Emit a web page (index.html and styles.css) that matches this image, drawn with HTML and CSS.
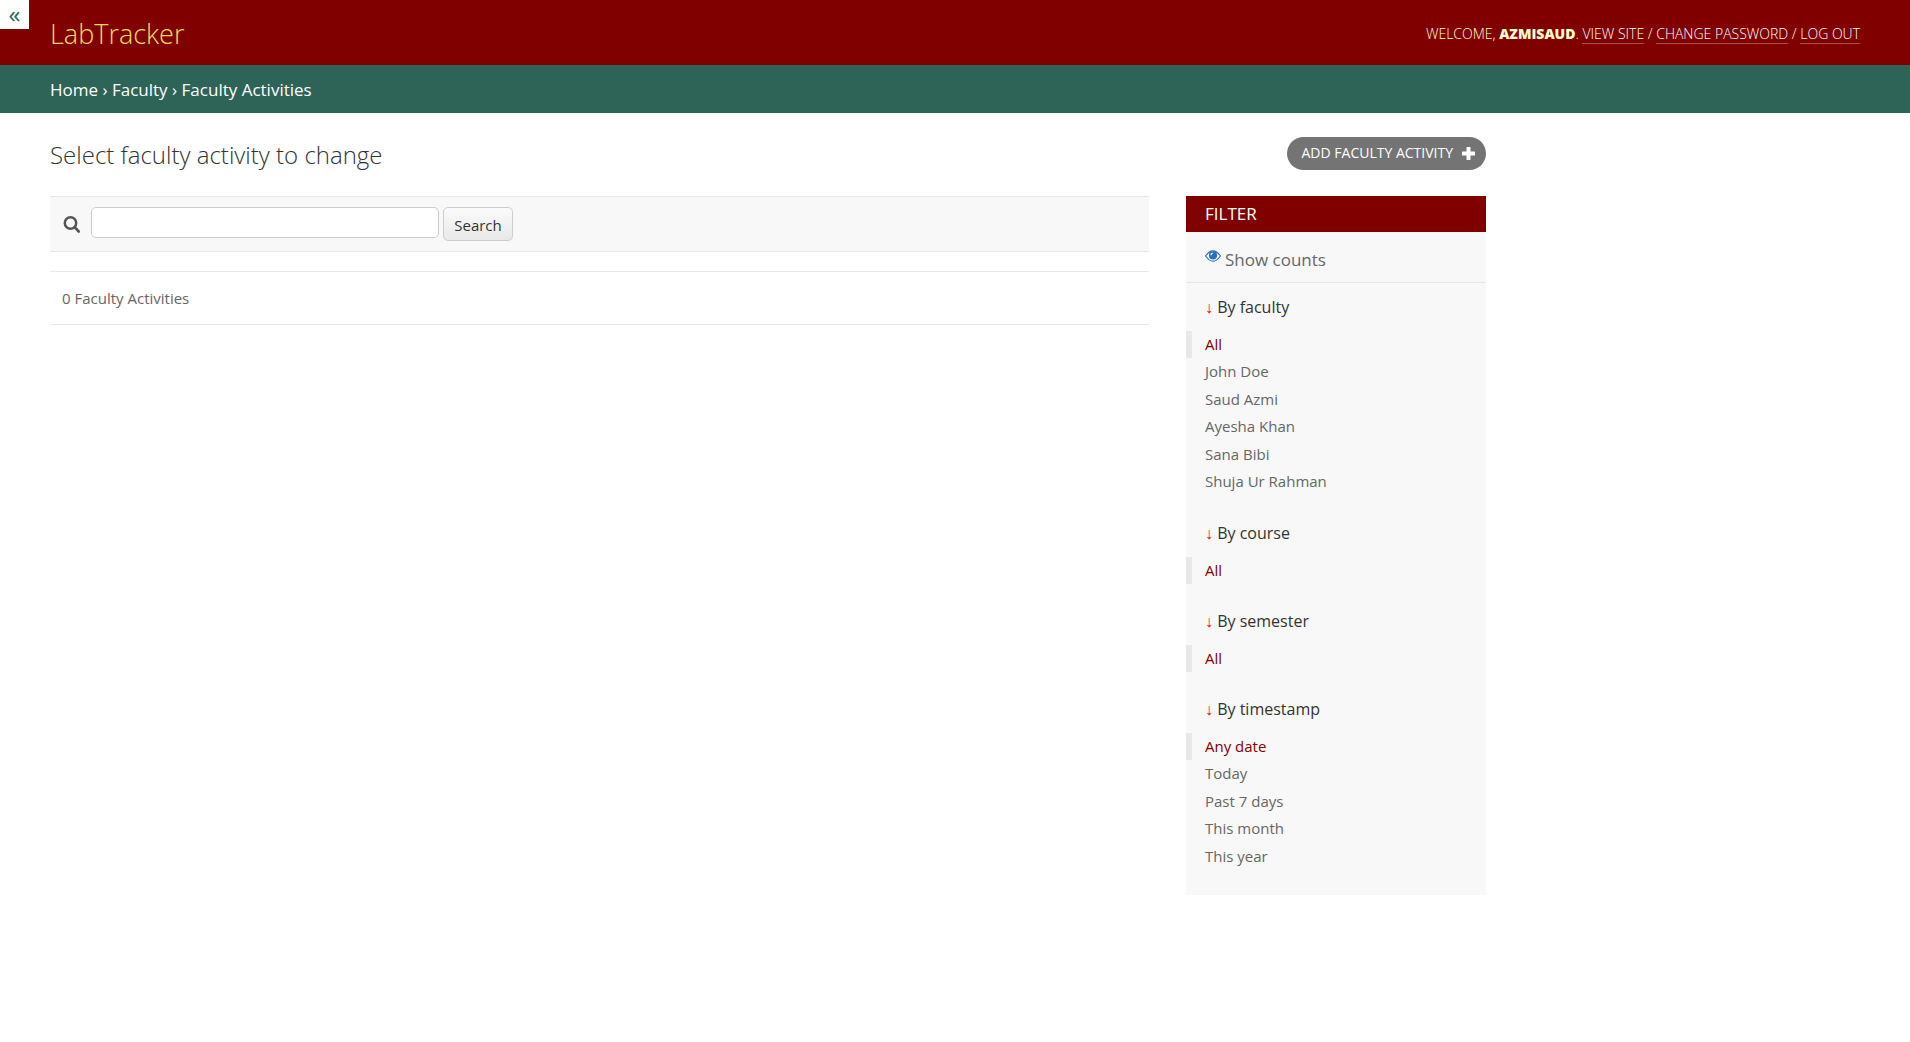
FILE: index.html
```html
<!DOCTYPE html>
<html lang="en">
<head>
<meta charset="utf-8">
<meta name="viewport" content="width=device-width, initial-scale=1">
<title>Select faculty activity to change | LabTracker</title>
<link rel="stylesheet" href="styles.css">
</head>
<body>
<button class="nav-toggle" type="button" aria-label="Toggle navigation">«</button>
<header class="header">
  <a class="brand" href="#">LabTracker</a>
  <div class="user-tools">Welcome, <strong>azmisaud</strong>. <a href="#">View site</a> / <a href="#">Change password</a> / <a href="#">Log out</a></div>
</header>
<nav class="breadcrumbs" aria-label="Breadcrumbs"><a href="#">Home</a> › <a href="#">Faculty</a> › <a href="#">Faculty Activities</a></nav>
<main class="content">
  <div class="title-row">
    <h1 class="title">Select faculty activity to change</h1>
    <a class="add-link" href="#">Add faculty activity
      <svg width="13" height="13" viewBox="0 0 13 13" aria-hidden="true"><path d="M5 0h3q.5 0 .5.5v4h4q.5 0 .5.5v3q0 .5-.5.5h-4v4q0 .5-.5.5H5q-.5 0-.5-.5v-4h-4Q0 8.500 0 8V5q0-.5.5-.5h4v-4Q4.500 0 5 0z" fill="#fff"/></svg></a>
  </div>
  <div class="changelist">
    <section class="results">
      <form class="toolbar">
        <label for="searchbar" aria-label="Search"><svg width="17" height="17" viewBox="0 0 17 17" aria-hidden="true"><circle cx="7.500" cy="7" r="5.700" fill="none" stroke="#555" stroke-width="2.500"/><path d="M11.700 11.200l4 4.300" stroke="#555" stroke-width="2.600" stroke-linecap="round"/></svg></label>
        <input class="searchbar" id="searchbar" type="text">
        <button class="search-button" type="button">Search</button>
      </form>
      <p class="paginator">0 Faculty Activities</p>
    </section>
    <aside class="filter">
      <h2 class="filter-title">Filter</h2>
      <a class="counts" href="#"><svg width="16" height="12" viewBox="0 0 16 12" aria-hidden="true"><path d="M.6 6C3.500 1.800 5.700.8 8 .8S12.500 1.800 15.400 6C12.500 10.200 10.300 11.200 8 11.200S3.500 10.200.6 6z" fill="#fff" stroke="#2b70bf" stroke-width="1.200"/><circle cx="8" cy="5.400" r="4.100" fill="#2b70bf"/><path d="M5.900 5.200Q6 3.400 7.700 3.100" fill="none" stroke="#fff" stroke-width="1.100"/></svg>Show counts</a>
      <details class="group" open><summary>By faculty</summary>
        <ul>
          <li class="selected"><a href="#">All</a></li>
          <li><a href="#">John Doe</a></li>
          <li><a href="#">Saud Azmi</a></li>
          <li><a href="#">Ayesha Khan</a></li>
          <li><a href="#">Sana Bibi</a></li>
          <li><a href="#">Shuja Ur Rahman</a></li>
        </ul>
      </details>
      <details class="group" open><summary>By course</summary>
        <ul><li class="selected"><a href="#">All</a></li></ul>
      </details>
      <details class="group" open><summary>By semester</summary>
        <ul><li class="selected"><a href="#">All</a></li></ul>
      </details>
      <details class="group" open><summary>By timestamp</summary>
        <ul>
          <li class="selected"><a href="#">Any date</a></li>
          <li><a href="#">Today</a></li>
          <li><a href="#">Past 7 days</a></li>
          <li><a href="#">This month</a></li>
          <li><a href="#">This year</a></li>
        </ul>
      </details>
    </aside>
  </div>
</main>
</body>
</html>
```
FILE: styles.css
```css
* { box-sizing: border-box; }

body {
  margin: 0;
  background: #fff;
  color: #333;
  font-family: "Open Sans", "Noto Sans", sans-serif;
  font-size: 15px;
  line-height: 20px;
}

a { color: inherit; text-decoration: none; }

.nav-toggle {
  position: absolute;
  top: 0;
  left: 0;
  width: 29px;
  height: 29px;
  padding: 0 0 2px;
  border: 0;
  background: #fff;
  color: #2e6357;
  font: 24px/24px "Open Sans", "Noto Sans", sans-serif;
}

.header {
  display: flex;
  align-items: center;
  justify-content: space-between;
  padding: 16px 50px 13px;
  background: #800000;
  color: #ffc;
}

.brand {
  color: #f5dd5d;
  font-size: 27px;
  font-weight: 300;
  line-height: 36px;
}

.user-tools {
  font-size: 14px;
  font-weight: 300;
  text-transform: uppercase;
}

.user-tools strong { font-weight: 800; }

.user-tools a {
  border-bottom: 1px solid #a64d4d;
  color: #fff;
}

.breadcrumbs {
  padding: 15px 50px 13px;
  background: #2e6357;
  color: #fff;
  font-size: 17px;
}

.content { padding: 24px 424px 50px 50px; }

.title-row {
  display: flex;
  align-items: flex-start;
  justify-content: space-between;
}

.title {
  margin: 0 0 23px;
  font-size: 24px;
  font-weight: 300;
  line-height: 36px;
}

.add-link {
  display: flex;
  align-items: center;
  gap: 9px;
  padding: 6px 11px 7px 15px;
  border-radius: 17px;
  background: #747474;
  color: #fff;
  font-size: 14px;
  text-transform: uppercase;
}

.changelist {
  display: flex;
  align-items: flex-start;
  gap: 37px;
}

.results { flex: 1; }

.toolbar {
  display: flex;
  align-items: flex-start;
  margin-bottom: 19px;
  padding: 10px 13px;
  border: solid #e8e8e8;
  border-width: 1px 0;
  background: #f8f8f8;
}

.toolbar label { margin-right: 11px; padding-top: 9px; line-height: 0; }

.searchbar {
  width: 348px;
  height: 31px;
  margin-right: 4px;
  border: 1px solid #ccc;
  border-radius: 5px;
  background: #fff;
  font: inherit;
}

.search-button {
  width: 70px;
  height: 34px;
  padding: 1px 0 0;
  border: 1px solid #ccc;
  border-radius: 5px;
  background: linear-gradient(#fbfbfb, #e8e8e8);
  color: #333;
  font: inherit;
}

.paginator {
  margin: 0;
  padding: 16px 12px;
  border: solid #e8e8e8;
  border-width: 1px 0;
  color: #666;
}

.filter {
  width: 300px;
  padding-bottom: 12px;
  background: #f8f8f8;
}

.filter-title {
  margin: 0;
  padding: 8px 19px;
  background: #800000;
  color: #fff;
  font-size: 17px;
  font-weight: 400;
  text-transform: uppercase;
}

.counts {
  display: flex;
  gap: 4px;
  padding: 18px 19px 12px;
  border-bottom: 1px solid #e8e8e8;
  color: #666;
  font-size: 17px;
}

.group summary {
  padding: 14px 19px;
  font-size: 16px;
  list-style: none;
}

.group summary::before {
  content: "↓ ";
  color: #f00;
}

.group ul {
  margin: 0;
  padding: 0 0 13px;
  list-style: none;
}

.group li {
  padding-left: 19px;
  color: #666;
  line-height: 27px;
}

.group li:nth-child(even) { padding-bottom: 1px; }

.group .selected {
  padding-left: 13px;
  border-left: 6px solid #e8e8e8;
  color: #800000;
}
```
